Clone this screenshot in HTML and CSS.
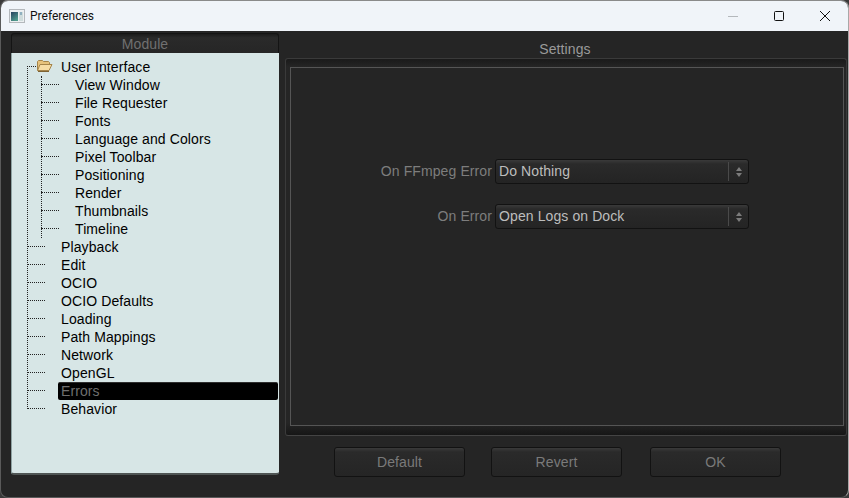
FILE: index.html
```html
<!DOCTYPE html>
<html lang="en">
<head>
    <meta charset="UTF-8">
    <title>Preferences</title>
    <link rel="stylesheet" href="styles.css">
</head>
<body>
<div class="window">
    <div class="titlebar">
        <svg class="app-icon" width="16" height="14" viewBox="0 0 16 14">
            <defs>
                <linearGradient id="pane" x1="0" y1="0" x2="0.6" y2="1">
                    <stop offset="0" stop-color="#26415e"/>
                    <stop offset="1" stop-color="#4f9a8c"/>
                </linearGradient>
            </defs>
            <rect x="0.5" y="0.5" width="15" height="13" fill="#eceff1" stroke="#b4b8bc"/>
            <rect x="2" y="3" width="7" height="9" fill="url(#pane)"/>
            <rect x="10" y="3" width="4" height="9" fill="#cfdcdc"/>
            <rect x="11" y="3" width="2" height="3" fill="#8fb0bf"/>
        </svg>
        <span class="title">Preferences</span>
        <div class="win-buttons">
            <svg width="12" height="12" viewBox="0 0 12 12"><path d="M1 6.5h10" stroke="#b4b8bc"/></svg>
            <svg width="12" height="12" viewBox="0 0 12 12"><rect x="1.5" y="1.5" width="9" height="9" rx="1" fill="none" stroke="#111"/></svg>
            <svg width="12" height="12" viewBox="0 0 12 12"><path d="M1 1l10 10M11 1L1 11" stroke="#111" fill="none"/></svg>
        </div>
    </div>

    <div class="content">
        <div class="left">
            <div class="module-head">Module</div>
            <div class="tree">
                <ul class="top-list">
                    <li class="row open">
                        <svg class="folder" width="17" height="13" viewBox="0 0 17 13">
                            <path d="M1.5 11.5V2.5l1-1h4l1 1h5l1 1v2" fill="#e6c27c" stroke="#a5844a"/>
                            <path d="M1.5 11.5l2.5-6h12l-3 6z" fill="#f6dca4" stroke="#a5844a"/>
                            <path d="M2 12.5h11" stroke="#7d6232"/>
                        </svg>
                        User Interface
                    </li>
                    <li>
                        <ul class="sub-list">
                            <li class="row">View Window</li>
                            <li class="row">File Requester</li>
                            <li class="row">Fonts</li>
                            <li class="row">Language and Colors</li>
                            <li class="row">Pixel Toolbar</li>
                            <li class="row">Positioning</li>
                            <li class="row">Render</li>
                            <li class="row">Thumbnails</li>
                            <li class="row">Timeline</li>
                        </ul>
                    </li>
                    <li class="row">Playback</li>
                    <li class="row">Edit</li>
                    <li class="row">OCIO</li>
                    <li class="row">OCIO Defaults</li>
                    <li class="row">Loading</li>
                    <li class="row">Path Mappings</li>
                    <li class="row">Network</li>
                    <li class="row">OpenGL</li>
                    <li class="row selected">Errors</li>
                    <li class="row">Behavior</li>
                </ul>
            </div>
        </div>

        <div class="right">
            <div class="settings-head">Settings</div>
            <div class="frame">
                <div class="inner">
                    <div class="field">
                        <label class="field-label">On FFmpeg Error</label>
                        <div class="combo">
                            <span class="combo-text">Do Nothing</span>
                            <span class="combo-arrows"><i class="up"></i><i class="down"></i></span>
                        </div>
                    </div>
                    <div class="field">
                        <label class="field-label">On Error</label>
                        <div class="combo">
                            <span class="combo-text">Open Logs on Dock</span>
                            <span class="combo-arrows"><i class="up"></i><i class="down"></i></span>
                        </div>
                    </div>
                </div>
            </div>
            <div class="buttons">
                <button class="btn">Default</button>
                <button class="btn">Revert</button>
                <button class="btn">OK</button>
            </div>
        </div>
    </div>
</div>
</body>
</html>
```

FILE: styles.css
```css
html, body, ul, li {
    margin: 0;
    padding: 0;
    list-style: none;
}

body {
    width: 849px;
    height: 498px;
    overflow: hidden;
    background: #3a3a3a;
    font-family: "Liberation Sans", Arial, sans-serif;
    font-size: 14px;
    letter-spacing: 0.1px;
}

.window {
    width: 849px;
    height: 498px;
    box-sizing: border-box;
    display: flex;
    flex-direction: column;
    background: #252525;
    border: 1px solid #5a5a5a;
    border-right-color: #a8a8a8;
    border-top-color: #8a8a8a;
    border-radius: 8px;
    overflow: hidden;
}

.titlebar {
    height: 30px;
    flex: none;
    display: flex;
    align-items: center;
    background: #f0f4f9;
    padding-left: 8px;
}

.app-icon {
    flex: none;
}

.title {
    margin-left: 5px;
    font-family: Roboto, "Noto Sans", sans-serif;
    font-size: 12px;
    letter-spacing: 0;
    color: #111;
}

.win-buttons {
    margin-left: auto;
    display: flex;
    gap: 34px;
    padding-right: 17px;
}

.content {
    flex: 1;
    display: flex;
    padding: 2px 1px 0 10px;
}

.left {
    width: 268px;
    height: 442px;
    flex: none;
    display: flex;
    flex-direction: column;
}

.module-head {
    height: 20px;
    line-height: 21px;
    text-align: center;
    color: #707070;
    background: linear-gradient(#1b1b1b, #2a2a2a 20%, #262626);
    border: 1px solid #141414;
    border-bottom: 0;
    border-radius: 3px 3px 0 0;
    box-sizing: border-box;
}

.tree {
    flex: 1;
    background: #d7e6e6;
    border-bottom: 2px solid #4f5554;
    border-left: 1px solid #8fa3a3;
    border-radius: 0 0 3px 3px;
    padding-top: 5px;
    color: #000;
}

.top-list {
    position: relative;
}

/* dotted tree lines */
.top-list::before {
    content: "";
    position: absolute;
    left: 15px;
    top: 8px;
    height: 343px;
    border-left: 1px dotted #222;
}

.sub-list {
    position: relative;
}

.sub-list::before {
    content: "";
    position: absolute;
    left: 29px;
    top: 0;
    height: 162px;
    border-left: 1px dotted #222;
}

.row {
    position: relative;
    height: 18px;
    line-height: 18px;
    padding-left: 49px;
}

.row::before {
    content: "";
    position: absolute;
    left: 15px;
    top: 8px;
    width: 18px;
    border-top: 1px dotted #222;
}

.sub-list .row {
    padding-left: 63px;
}

.sub-list .row::before {
    left: 29px;
}

.row.open::before {
    width: 9px;
}

.folder {
    position: absolute;
    left: 24px;
    top: 1px;
}

.row.selected {
    margin: 0 1px 0 46px;
    padding-left: 3px;
    background: #000;
    border-radius: 2px;
    border-top: 1px solid #2e2e2e;
    box-sizing: border-box;
    line-height: 17px;
    color: #6f6f6f;
}

.row.selected::before {
    left: -31px;
    top: 7px;
}

.right {
    flex: 1;
    margin-left: 6px;
    display: flex;
    flex-direction: column;
}

.settings-head {
    height: 25px;
    line-height: 32px;
    padding-right: 2px;
    text-align: center;
    color: #9a9a9a;
}

.frame {
    height: 378px;
    box-sizing: border-box;
    padding: 8px 2px 9px 4px;
    border: 1px solid #3a3a3a;
    border-bottom-color: #444;
    border-radius: 3px;
    background: linear-gradient(#1a1a1a, #252525 8px, #252525 calc(100% - 12px), #161616);
}

.inner {
    height: 100%;
    box-sizing: border-box;
    border: 1px solid #555;
    background: #252525;
    display: flex;
    flex-direction: column;
    gap: 20px;
    padding-top: 91px;
}

.field {
    display: flex;
    align-items: center;
}

.field-label {
    width: 201px;
    padding-bottom: 2px;
    text-align: right;
    color: #7d7d7d;
}

.combo {
    margin-left: 3px;
    width: 254px;
    height: 25px;
    box-sizing: border-box;
    display: flex;
    align-items: center;
    border: 1px solid #121212;
    border-radius: 3px;
    background: linear-gradient(#3a3a3a, #2a2a2a 4px, #242424);
    color: #bdbdbd;
}

.combo-text {
    flex: 1;
    padding: 0 0 2px 3px;
}

.combo-arrows {
    width: 19px;
    height: 19px;
    border-left: 1px solid #4a4a4a;
    display: flex;
    flex-direction: column;
    align-items: center;
    justify-content: center;
    gap: 2px;
}

.combo-arrows i {
    display: block;
    width: 0;
    height: 0;
    border-left: 3px solid transparent;
    border-right: 3px solid transparent;
}

.combo-arrows .up {
    border-bottom: 4px solid #7c7c7c;
}

.combo-arrows .down {
    border-top: 4px solid #7c7c7c;
}

.buttons {
    display: flex;
    gap: 26px;
    margin-top: 11px;
    padding-left: 49px;
}

.btn {
    width: 131px;
    height: 30px;
    padding: 0;
    border: 1px solid #121212;
    border-radius: 3px;
    background: linear-gradient(#3a3a3a, #2a2a2a 4px, #252525);
    font-family: "Liberation Sans", Arial, sans-serif;
    font-size: 14px;
    letter-spacing: 0.1px;
    color: #7a7a7a;
}

.btn:last-child {
    margin-left: 2px;
}
```
